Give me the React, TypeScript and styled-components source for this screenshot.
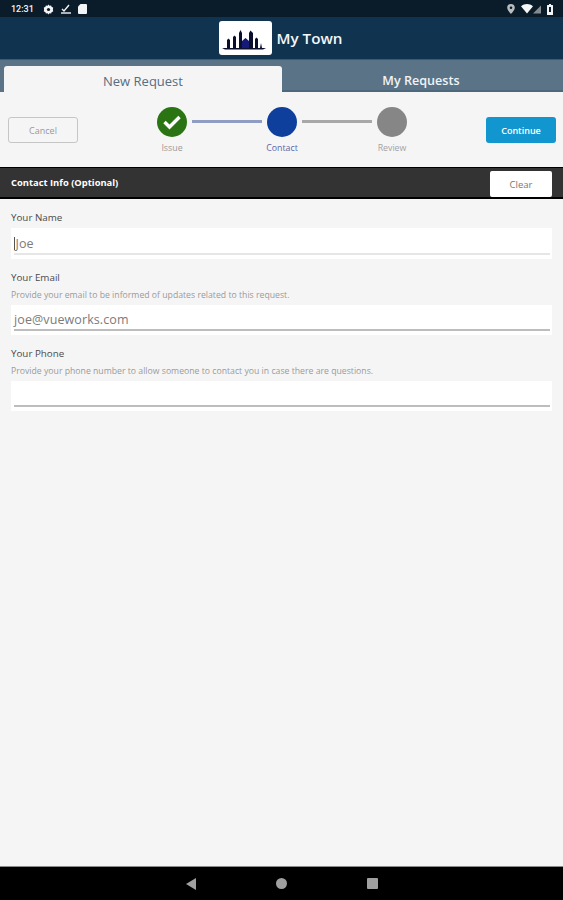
import React from 'react';
import styled, { createGlobalStyle } from 'styled-components';

const GlobalStyle = createGlobalStyle`
  html, body {
    margin: 0;
    padding: 0;
    background: #f5f5f5;
  }
  * {
    box-sizing: border-box;
  }
`;

const Page = styled.div`
  display: flex;
  flex-direction: column;
  width: 563px;
  height: 900px;
  overflow: hidden;
  background: #f5f5f5;
  font-family: 'Open Sans', 'Noto Sans', sans-serif;
`;

const StatusBar = styled.div`
  display: flex;
  align-items: center;
  justify-content: space-between;
  flex: 0 0 17px;
  padding: 1px 10px 0 11px;
  background: #0a1c29;
`;

const StatusGroup = styled.div`
  display: flex;
  align-items: center;
  gap: 7px;
`;

const RightStatusGroup = styled(StatusGroup)`
  gap: 6px;
`;

const Clock = styled.span`
  margin-right: 2px;
  color: #f2f4f5;
  font-family: Roboto, sans-serif;
  font-size: 9px;
  font-weight: 500;
`;

const Header = styled.div`
  display: flex;
  align-items: center;
  justify-content: center;
  gap: 5px;
  flex: 0 0 42px;
  padding: 0 2px 0 0;
  background: #10344f;
`;

const LogoBox = styled.div`
  display: flex;
  align-items: center;
  justify-content: center;
  width: 53px;
  height: 34px;
  padding: 3px 3px 0 0;
  background: #fff;
  border-radius: 3px;
`;

const AppTitle = styled.span`
  color: #f4f6f8;
  font-size: 15.2px;
  font-weight: 600;
`;

const Tabs = styled.div`
  display: flex;
  flex: 0 0 33px;
  align-items: flex-end;
  padding: 0 0 0 4px;
  background: #5a7387;
  border-top: 1px solid #3f5a70;
`;

const Tab = styled.div<{ $active?: boolean }>`
  display: flex;
  align-items: center;
  justify-content: center;
  flex: 0 0 ${p => (p.$active ? '278px' : '281px')};
  height: 26px;
  padding: ${p => (p.$active ? '3px 0 0' : '3px 3px 0 0')};
  border-radius: 3px 3px 0 0;
  background: ${p => (p.$active ? '#f5f5f5' : 'transparent')};
  box-shadow: ${p => (p.$active ? 'none' : 'inset 0 -2px 0 #4e687b')};
  color: ${p => (p.$active ? '#566d82' : '#f1f3f5')};
  font-size: ${p => (p.$active ? '13px' : '12.6px')};
  font-weight: ${p => (p.$active ? 500 : 600)};
`;

const Toolbar = styled.div`
  display: flex;
  align-items: flex-start;
  justify-content: space-between;
  flex: 0 0 75px;
  padding: 15px 7px 0 8px;
`;

const ActionButton = styled.div<{ $primary?: boolean }>`
  display: flex;
  align-items: center;
  justify-content: center;
  width: 70px;
  height: 26px;
  margin-top: 10px;
  border-radius: 3px;
  border: ${p => (p.$primary ? 'none' : '1.5px solid #c6c6c6')};
  background: ${p => (p.$primary ? '#1296d0' : 'transparent')};
  color: ${p => (p.$primary ? '#fff' : '#999')};
  font-size: 9px;
  font-weight: ${p => (p.$primary ? 600 : 400)};
`;

const Stepper = styled.div`
  display: flex;
  align-items: flex-start;
`;

const Step = styled.div`
  display: flex;
  flex-direction: column;
  align-items: center;
  width: 30px;
`;

const StepCircle = styled.div<{ $color: string }>`
  display: flex;
  align-items: center;
  justify-content: center;
  width: 30px;
  height: 30px;
  border-radius: 50%;
  background: ${p => p.$color};
`;

const StepLabel = styled.span<{ $color: string }>`
  margin-top: 5px;
  color: ${p => p.$color};
  font-size: 8.8px;
  line-height: 12px;
`;

const Connector = styled.div<{ $color: string }>`
  width: 70px;
  height: 3px;
  margin: 13px 5px 0;
  background: ${p => p.$color};
`;

const SectionBar = styled.div`
  display: flex;
  align-items: center;
  justify-content: space-between;
  flex: 0 0 32px;
  padding: 0 11px;
  background: #333;
  border-top: 1px solid #000;
  border-bottom: 2px solid #000;
`;

const SectionTitle = styled.span`
  color: #fff;
  font-size: 9.4px;
  font-weight: 700;
`;

const ClearButton = styled.div`
  display: flex;
  align-items: center;
  justify-content: center;
  width: 62px;
  height: 26px;
  margin-top: 3px;
  border-radius: 2px;
  background: #fff;
  color: #777;
  font-size: 9.5px;
`;

const Form = styled.div`
  display: flex;
  flex-direction: column;
  gap: 12px;
  padding: 12px 11px 0;
`;

const Field = styled.div`
  display: flex;
  flex-direction: column;
`;

const FieldLabel = styled.span`
  color: #4a4a4a;
  font-size: 9.8px;
  font-weight: 500;
  line-height: 14px;
`;

const FieldHelp = styled.span`
  margin-top: 4px;
  color: #9a9a9a;
  font-size: 8.7px;
  line-height: 12px;
`;

const InputBox = styled.div<{ $hint?: boolean }>`
  display: flex;
  flex-direction: column;
  justify-content: flex-end;
  height: ${p => (p.$hint ? '30px' : '31px')};
  margin-top: ${p => (p.$hint ? '4px' : '3px')};
  padding: 0 2px 4px 3px;
  background: #fff;
`;

const InputText = styled.div<{ $focused?: boolean }>`
  height: 21px;
  color: #7b7b7b;
  font-size: 12.5px;
  line-height: 20px;
  letter-spacing: 0.1px;
  border-bottom: 2px solid ${p => (p.$focused ? '#e6e6e6' : '#bdbdbd')};
`;

const Caret = styled.span`
  display: inline-block;
  width: 1px;
  height: 13px;
  margin-right: 0.5px;
  vertical-align: -2px;
  background: #555;
`;

const Spacer = styled.div`
  flex: 1;
`;

const NavBar = styled.div`
  display: flex;
  align-items: center;
  justify-content: center;
  gap: 80px;
  flex: 0 0 34px;
  background: #000;
  border-top: 1px solid #8a8a8a;
`;

const SkylineLogo = () => (
  <svg width="44" height="20" viewBox="0 0 44 20">
    <path
      d="M0 18h44l-3 1.4H3zM5 18v-8l1.5-1.5L8 10v8zM11 18v-11l1.5-1.5L14 7v11zM17 18v-15l1.5-3 1.5 3v15zM27 18v-15l1.5-2.5L31 3v15zM33 18v-9l1.5-1.5L36 9v9zM38 18l1-5 1 5z"
      fill="#0b0f2e"
    />
    <path d="M20 18v-7l3.5-3 3.5 3v7z" fill="#15197a" />
  </svg>
);

const App: React.FC = () => {
  return (
    <Page>
      <GlobalStyle />
      <StatusBar>
        <StatusGroup>
          <Clock>12:31</Clock>
          <svg width="11" height="11" viewBox="0 0 11 11">
            <path
              d="M5.5 0.5l1 1.2 1.6-.3.6 1.5 1.5.7-.3 1.9.3 1.9-1.5.7-.6 1.5-1.6-.3-1 1.2-1-1.2-1.6.3-.6-1.5-1.5-.7.3-1.9-.3-1.9 1.5-.7.6-1.5 1.6.3z"
              fill="#f2f4f5"
            />
            <circle cx="5.5" cy="5.5" r="1.6" fill="#0a1c29" />
          </svg>
          <svg width="10" height="10" viewBox="0 0 10 10">
            <path d="M1 5l2 2 5-6" fill="none" stroke="#f2f4f5" strokeWidth="1.4" />
            <path d="M0 8.3h10v1.4H0z" fill="#f2f4f5" />
          </svg>
          <svg width="9" height="10" viewBox="0 0 9 10">
            <path d="M2.5 0H8a1 1 0 0 1 1 1v8a1 1 0 0 1-1 1H1a1 1 0 0 1-1-1V2.5z" fill="#f2f4f5" />
          </svg>
        </StatusGroup>
        <RightStatusGroup>
          <svg width="8" height="10" viewBox="0 0 8 10">
            <path d="M4 0a3.8 3.8 0 0 1 3.8 3.8C7.8 6.4 4 10 4 10S.2 6.4.2 3.8A3.8 3.8 0 0 1 4 0z" fill="#b8bcbf" />
            <circle cx="4" cy="3.8" r="1.3" fill="#0a1c29" />
          </svg>
          <svg width="20" height="10" viewBox="0 0 20 10">
            <path d="M0 2.2C3.6-.6 8.4-.6 12 2.2L6 9.5z" fill="#f6f7f8" />
            <path d="M20 1.5V9.5H12z" fill="#858c91" />
          </svg>
          <svg width="6" height="11" viewBox="0 0 6 11">
            <path d="M2 0h2v1h1.5a.5.5 0 0 1 .5.5v9a.5.5 0 0 1-.5.5H.5a.5.5 0 0 1-.5-.5v-9A.5.5 0 0 1 .5 1H2z" fill="#f2f4f5" />
            <path d="M2 3h2v5H2z" fill="#0a1c29" />
          </svg>
        </RightStatusGroup>
      </StatusBar>

      <Header>
        <LogoBox>
          <SkylineLogo />
        </LogoBox>
        <AppTitle>My Town</AppTitle>
      </Header>

      <Tabs>
        <Tab $active>New Request</Tab>
        <Tab>My Requests</Tab>
      </Tabs>

      <Toolbar>
        <ActionButton>Cancel</ActionButton>
        <Stepper>
          <Step>
            <StepCircle $color="#2a7414">
              <svg width="20" height="16" viewBox="0 0 20 16">
                <path d="M2.5 8l5 5 10-10" fill="none" stroke="#fff" strokeWidth="3.4" />
              </svg>
            </StepCircle>
            <StepLabel $color="#9a9a9a">Issue</StepLabel>
          </Step>
          <Connector $color="#8f9dc2" />
          <Step>
            <StepCircle $color="#0e3f9c" />
            <StepLabel $color="#5a68a8">Contact</StepLabel>
          </Step>
          <Connector $color="#a8a8a8" />
          <Step>
            <StepCircle $color="#868686" />
            <StepLabel $color="#a3a3a3">Review</StepLabel>
          </Step>
        </Stepper>
        <ActionButton $primary>Continue</ActionButton>
      </Toolbar>

      <SectionBar>
        <SectionTitle>Contact Info (Optional)</SectionTitle>
        <ClearButton>Clear</ClearButton>
      </SectionBar>

      <Form>
        <Field>
          <FieldLabel>Your Name</FieldLabel>
          <InputBox>
            <InputText $focused>
              <Caret />
              Joe
            </InputText>
          </InputBox>
        </Field>
        <Field>
          <FieldLabel>Your Email</FieldLabel>
          <FieldHelp>Provide your email to be informed of updates related to this request.</FieldHelp>
          <InputBox $hint>
            <InputText>joe@vueworks.com</InputText>
          </InputBox>
        </Field>
        <Field>
          <FieldLabel>Your Phone</FieldLabel>
          <FieldHelp>Provide your phone number to allow someone to contact you in case there are questions.</FieldHelp>
          <InputBox $hint>
            <InputText />
          </InputBox>
        </Field>
      </Form>

      <Spacer />

      <NavBar>
        <svg width="10" height="12" viewBox="0 0 10 12">
          <path d="M10 0v12L0 6z" fill="#a0a0a0" />
        </svg>
        <svg width="11" height="11" viewBox="0 0 11 11">
          <circle cx="5.5" cy="5.5" r="5.5" fill="#a0a0a0" />
        </svg>
        <svg width="11" height="11" viewBox="0 0 11 11">
          <rect width="11" height="11" rx="1" fill="#a0a0a0" />
        </svg>
      </NavBar>
    </Page>
  );
};

export default App;
